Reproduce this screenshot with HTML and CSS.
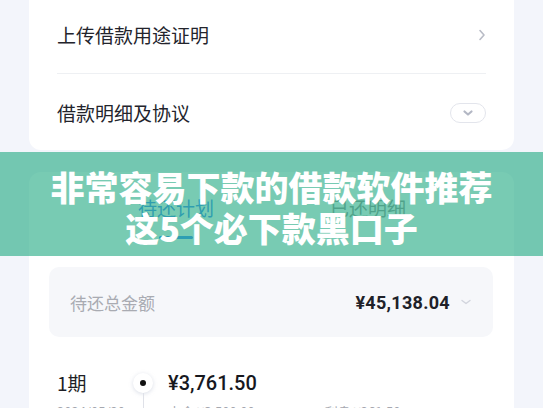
FILE: index.html
```html
<!DOCTYPE html>
<html lang="zh-CN">
<head>
<meta charset="utf-8">
<title>借款详情</title>
<link rel="stylesheet" href="styles.css">
</head>
<body>
<div class="page">
  <section class="card card-top">
    <div class="row row-first">
      <span class="row-label">上传借款用途证明</span>
      <svg class="chev-right" width="8" height="12" viewBox="0 0 8 12"><path d="M2 1.5 L6 6 L2 10.5" fill="none" stroke="#b9bcc6" stroke-width="1.6" stroke-linecap="round" stroke-linejoin="round"/></svg>
    </div>
    <div class="row row-second">
      <span class="row-label">借款明细及协议</span>
      <span class="pill">
        <svg width="12" height="8" viewBox="0 0 12 8"><path d="M2.5 2.5 L6 5.5 L9.5 2.5" fill="none" stroke="#b3b7c4" stroke-width="2.2" stroke-linecap="round" stroke-linejoin="round"/></svg>
      </span>
    </div>
  </section>

  <section class="card card-plan">
    <div class="tabs">
      <div class="tab tab-active"><span>待还计划</span><i class="tab-bar"></i></div>
      <div class="tab"><span>已还明细</span><i class="tab-bar tab-bar-off"></i></div>
    </div>
    <div class="total">
      <span class="total-label">待还总金额</span>
      <span class="total-right">
        <span class="total-amount">¥45,138.04</span>
        <svg width="12" height="8" viewBox="0 0 12 8"><path d="M2 2.5 L6 5.5 L10 2.5" fill="none" stroke="#d2d5dd" stroke-width="1.4" stroke-linecap="round" stroke-linejoin="round"/></svg>
      </span>
    </div>
    <div class="term">
      <div class="term-left">
        <span class="term-no">1期</span>
        <span class="term-date">2024/05/20</span>
      </div>
      <div class="term-axis">
        <span class="dot-halo"><span class="dot"></span></span>
        <span class="axis-line"></span>
      </div>
      <div class="term-right">
        <span class="term-amount">¥3,761.50</span>
        <span class="term-detail"><span>本金 ¥3,500.00</span><span>利息 ¥261.50</span></span>
      </div>
    </div>
  </section>
</div>

<div class="banner">
  <p class="banner-line">非常容易下款的借款软件推荐</p>
  <p class="banner-line">这5个必下款黑口子</p>
</div>
</body>
</html>
```

FILE: styles.css
```css
* { box-sizing: border-box; }
html, body {
  margin: 0;
  padding: 0;
  width: 543px;
  height: 408px;
  overflow: hidden;
  background: #f3f5fb;
  font-family: "Noto Sans CJK SC", "Noto Sans", sans-serif;
}
.page {
  padding: 0 29px;
  display: flex;
  flex-direction: column;
  gap: 22px;
}
.card {
  background: #ffffff;
  border-radius: 12px;
}
.card-top {
  border-radius: 0 0 12px 12px;
  padding: 0 28px;
  height: 150px;
}
.row {
  display: flex;
  align-items: center;
  justify-content: space-between;
}
.row-first {
  height: 74px;
  padding-bottom: 4px;
  border-bottom: 1px solid #eef0f3;
}
.row-second {
  height: 76px;
  padding-top: 2px;
}
.row-label {
  font-size: 19px;
  color: #23242c;
  line-height: 24px;
}
.chev-right { margin-right: 0; }
.pill {
  width: 36px;
  height: 20px;
  border: 1px solid #e3e5ec;
  border-radius: 10px;
  display: flex;
  align-items: center;
  justify-content: center;
}
.card-plan {
  padding: 23px 21px 0 20px;
  height: 260px;
}
.tabs {
  display: flex;
  justify-content: center;
  gap: 116px;
  padding-left: 2px;
}
.tab {
  display: flex;
  flex-direction: column;
  align-items: center;
  font-size: 19px;
  line-height: 26px;
  color: #999999;
}
.tab-active { color: #4a8ef5; }
.tab-bar {
  display: block;
  width: 34px;
  height: 3px;
  margin-top: 15px;
  border-radius: 2px;
  background: #4690ff;
}
.tab-bar-off { background: transparent; }
.total {
  margin-top: 28px;
  height: 70px;
  background: #f6f7fa;
  border-radius: 10px;
  display: flex;
  align-items: center;
  justify-content: space-between;
  padding: 0 21px 0 21px;
}
.total-label {
  font-size: 17px;
  color: #a9abb2;
}
.total-right {
  display: flex;
  align-items: center;
  gap: 10px;
}
.total-amount {
  font-family: "Roboto", "Noto Sans", sans-serif;
  font-weight: 700;
  font-size: 18px;
  color: #202128;
  letter-spacing: 0.3px;
}
.term {
  margin-top: 34px;
  display: flex;
  padding-left: 8px;
}
.term-left {
  width: 75px;
  display: flex;
  flex-direction: column;
  gap: 8px;
}
.term-no {
  font-size: 19px;
  line-height: 24px;
  color: #1e1f26;
}
.term-date, .term-detail {
  font-size: 13px;
  line-height: 18px;
  color: #a6a8b0;
}
.term-axis {
  width: 22px;
  display: flex;
  flex-direction: column;
  align-items: center;
}
.dot-halo {
  width: 20px;
  height: 20px;
  margin-top: 2px;
  border-radius: 50%;
  background: #ffffff;
  box-shadow: 0 1px 4px rgba(150, 160, 185, 0.35);
  display: flex;
  align-items: center;
  justify-content: center;
}
.dot {
  width: 6px;
  height: 6px;
  border-radius: 50%;
  background: #111111;
}
.axis-line {
  width: 1px;
  height: 40px;
  background: #dfe1e8;
}
.term-right {
  padding-left: 14px;
  display: flex;
  flex-direction: column;
  gap: 8px;
}
.term-amount {
  font-family: "Roboto", "Noto Sans", sans-serif;
  font-weight: 500;
  font-size: 20px;
  line-height: 24px;
  color: #17181e;
}
.term-detail {
  display: flex;
  gap: 70px;
}
.banner {
  position: absolute;
  left: 0;
  right: 0;
  top: 152px;
  height: 104px;
  background: rgba(30, 168, 128, 0.6);
  padding-top: 14px;
  text-align: center;
}
.banner-line {
  margin: 0;
  color: #ffffff;
  font-size: 34px;
  line-height: 41px;
  font-weight: 900;
  letter-spacing: 0;
}
```
